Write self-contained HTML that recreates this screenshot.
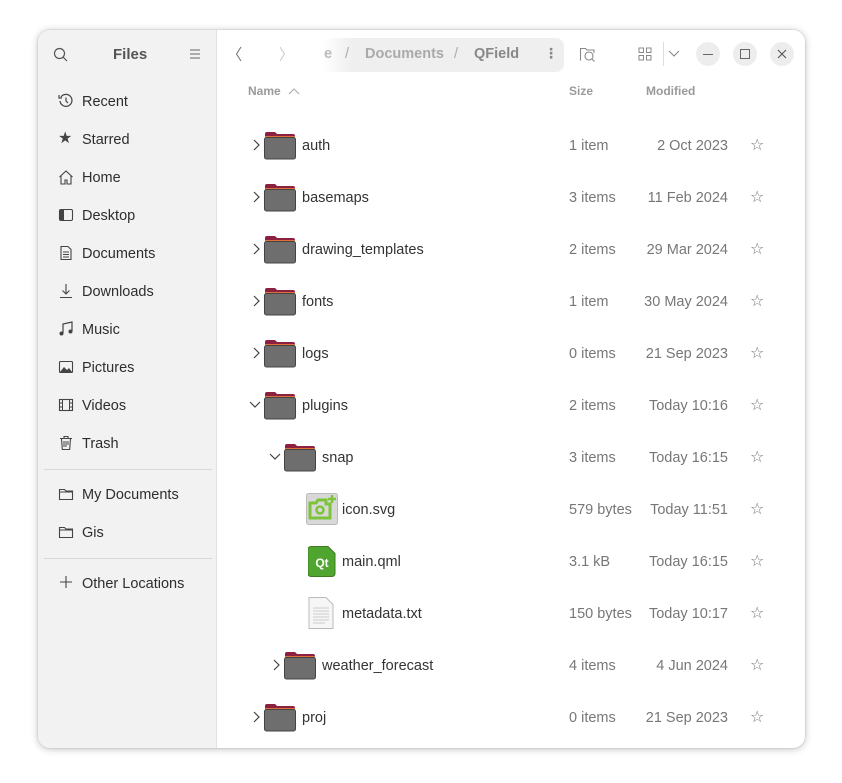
<!DOCTYPE html>
<html><head><meta charset="utf-8"><style>
*{margin:0;padding:0;box-sizing:border-box}
body{width:842px;height:783px;background:#fff;font-family:"Liberation Sans","DejaVu Sans",sans-serif;position:relative;overflow:hidden;color:#333}
.win{position:absolute;left:38px;top:30px;width:767px;height:718px;border-radius:12px;background:#fff;box-shadow:0 1px 8px rgba(0,0,0,.25),0 0 0 1px rgba(0,0,0,.06);overflow:hidden}
.side{position:absolute;left:0;top:0;width:179px;height:100%;background:#f2f2f2;border-right:1px solid #e2e2e2}
.a{position:absolute;white-space:nowrap}
.si{font-size:14.5px;color:#2e2e2e;margin-top:2px}
.sep{position:absolute;left:6px;width:168px;height:1px;background:#d8d8d8}
.hdr{font-size:12px;font-weight:bold;color:#9a9a9a}
.t{font-size:14.5px;color:#333}
.g{font-size:14.5px;color:#777}
.circ{position:absolute;width:24px;height:24px;border-radius:50%;background:#ededed}
</style></head><body>
<div class="win">
<div class="side">
 <svg class="a" style="left:15px;top:17px" width="16" height="16" viewBox="0 0 16 16"><circle cx="6.5" cy="6.5" r="5" fill="none" stroke="#555" stroke-width="1.2"/><path d="M10.3 10.3L14 14" stroke="#555" stroke-width="1.2"/></svg>
 <div class="a" style="left:75px;top:16px;font-size:15px;font-weight:bold;color:#555">Files</div>
 <svg class="a" style="left:151px;top:18px" width="12" height="12" viewBox="0 0 12 12"><path d="M1 2h10M1 6h10M1 10h10" stroke="#666" stroke-width="1"/></svg>
 <svg class="a" style="left:20px;top:63px" width="16" height="16" viewBox="0 0 16 16"><path d="M3 4A6 6 0 1 1 2 8" fill="none" stroke="#444" stroke-width="1.2"/><path d="M1 2v3h3" fill="none" stroke="#444" stroke-width="1.2"/><path d="M8 4.5V8l2 2" fill="none" stroke="#444" stroke-width="1.2"/></svg>
 <div class="a si" style="left:44px;top:62px">Recent</div>
 <div class="a" style="left:20px;top:98px;font-size:16px;color:#444">★</div>
 <div class="a si" style="left:44px;top:100px">Starred</div>
 <svg class="a" style="left:20px;top:139px" width="16" height="16" viewBox="0 0 16 16"><path d="M1.5 8L8 2l6.5 6M3 7v8h4v-4h2v4h4V7" fill="none" stroke="#444" stroke-width="1.1"/></svg>
 <div class="a si" style="left:44px;top:138px">Home</div>
 <svg class="a" style="left:20px;top:177px" width="16" height="16" viewBox="0 0 16 16"><rect x="1.5" y="2.5" width="13" height="11" rx="1.5" fill="none" stroke="#444" stroke-width="1.1"/><rect x="2" y="3" width="4" height="10" fill="#444"/></svg>
 <div class="a si" style="left:44px;top:176px">Desktop</div>
 <svg class="a" style="left:20px;top:215px" width="16" height="16" viewBox="0 0 16 16"><path d="M3 1.5h7l3 3v10H3z" fill="none" stroke="#444" stroke-width="1.1"/><path d="M5 7h6M5 9.5h6M5 12h6" stroke="#444"/></svg>
 <div class="a si" style="left:44px;top:214px">Documents</div>
 <svg class="a" style="left:20px;top:253px" width="16" height="16" viewBox="0 0 16 16"><path d="M8 1v10M4.5 7.5L8 11l3.5-3.5M2 14.5h12" fill="none" stroke="#444" stroke-width="1.1"/></svg>
 <div class="a si" style="left:44px;top:252px">Downloads</div>
 <svg class="a" style="left:20px;top:291px" width="16" height="16" viewBox="0 0 16 16"><path d="M5 12V3l9-2v9" fill="none" stroke="#444" stroke-width="1.2"/><circle cx="3.5" cy="12.5" r="2" fill="#444"/><circle cx="12.5" cy="10.5" r="2" fill="#444"/></svg>
 <div class="a si" style="left:44px;top:290px">Music</div>
 <svg class="a" style="left:20px;top:329px" width="16" height="16" viewBox="0 0 16 16"><rect x="1.5" y="2.5" width="13" height="11" rx="1" fill="none" stroke="#444" stroke-width="1.1"/><path d="M2 13l4-5 3 3 2-2 3 4z" fill="#444"/></svg>
 <div class="a si" style="left:44px;top:328px">Pictures</div>
 <svg class="a" style="left:20px;top:367px" width="16" height="16" viewBox="0 0 16 16"><rect x="1.5" y="2.5" width="13" height="11" fill="none" stroke="#444" stroke-width="1.1"/><path d="M4.5 3v10M11.5 3v10M2 6h2.5M2 10h2.5M11.5 6H14M11.5 10H14" stroke="#444"/></svg>
 <div class="a si" style="left:44px;top:366px">Videos</div>
 <svg class="a" style="left:20px;top:405px" width="16" height="16" viewBox="0 0 16 16"><path d="M2 3.5h12M6 3.5V1.5h4v2M3.5 3.5l.8 11h7.4l.8-11" fill="none" stroke="#444" stroke-width="1.1"/><path d="M6 6v6M8 6v6M10 6v4" stroke="#444"/></svg>
 <div class="a si" style="left:44px;top:404px">Trash</div>
 <div class="sep" style="top:439px"></div>
 <svg class="a" style="left:20px;top:456px" width="16" height="16" viewBox="0 0 16 16"><path d="M1.5 3.5h5l1.5 1.5h6.5v8.5h-13z" fill="none" stroke="#444" stroke-width="1.1"/><path d="M1.5 6h13" stroke="#444"/></svg>
 <div class="a si" style="left:44px;top:455px">My Documents</div>
 <svg class="a" style="left:20px;top:494px" width="16" height="16" viewBox="0 0 16 16"><path d="M1.5 3.5h5l1.5 1.5h6.5v8.5h-13z" fill="none" stroke="#444" stroke-width="1.1"/><path d="M1.5 6h13" stroke="#444"/></svg>
 <div class="a si" style="left:44px;top:493px">Gis</div>
 <div class="sep" style="top:528px"></div>
 <svg class="a" style="left:21px;top:545px" width="14" height="14" viewBox="0 0 14 14"><path d="M7 1v12M1 7h12" stroke="#444" stroke-width="1.1"/></svg>
 <div class="a si" style="left:44px;top:544px">Other Locations</div>
</div>
<!-- header -->
<div class="a" style="left:284px;top:8px;width:242px;height:34px;border-radius:8px;background:linear-gradient(90deg,#fff 0,#efefef 30px,#efefef 100%)"></div>
<svg class="a" style="left:197px;top:16px" width="8" height="16" viewBox="0 0 8 16"><path d="M6 1L1.5 8 6 15" fill="none" stroke="#777" stroke-width="1.1"/></svg>
<svg class="a" style="left:240px;top:16px" width="8" height="16" viewBox="0 0 8 16"><path d="M2 1l4.5 7L2 15" fill="none" stroke="#ccc" stroke-width="1.1"/></svg>
<div class="a" style="left:286px;top:16px;font-size:14.5px;font-weight:bold;color:#bbb">e</div>
<div class="a" style="left:307px;top:16px;font-size:14.5px;color:#aaa">/</div>
<div class="a" style="left:327px;top:16px;font-size:14.5px;font-weight:bold;color:#aaa">Documents</div>
<div class="a" style="left:416px;top:16px;font-size:14.5px;color:#aaa">/</div>
<div class="a" style="left:436px;top:16px;font-size:14.5px;font-weight:bold;color:#888">QField</div>
<div class="a" style="left:506px;top:15px;font-size:14px;color:#888;font-weight:bold">⋮</div>
<svg class="a" style="left:541px;top:15px" width="18" height="18" viewBox="0 0 18 18"><path d="M1.5 15.5V3.5h5l1.5 1.5h7v3" fill="none" stroke="#888" stroke-width="1.1"/><circle cx="10" cy="11" r="4" fill="none" stroke="#888" stroke-width="1.1"/><path d="M13 14l2.5 2.5" stroke="#888" stroke-width="1.2"/></svg>
<svg class="a" style="left:600px;top:17px" width="14" height="14" viewBox="0 0 14 14"><rect x="1" y="1" width="4.5" height="4.5" fill="none" stroke="#888"/><rect x="8.5" y="1" width="4.5" height="4.5" fill="none" stroke="#888"/><rect x="1" y="8.5" width="4.5" height="4.5" fill="none" stroke="#888"/><rect x="8.5" y="8.5" width="4.5" height="4.5" fill="none" stroke="#888"/></svg>
<div class="a" style="left:625px;top:12px;width:1px;height:24px;background:#ddd"></div>
<svg class="a" style="left:630px;top:19px" width="12" height="10" viewBox="0 0 12 10"><path d="M1 2l5 5 5-5" fill="none" stroke="#888" stroke-width="1.1"/></svg>
<div class="circ" style="left:658px;top:12px"></div><div class="a" style="left:665px;top:24px;width:10px;height:1px;background:#666"></div>
<div class="circ" style="left:695px;top:12px"></div><div class="a" style="left:702px;top:19px;width:10px;height:10px;border:1px solid #666"></div>
<div class="circ" style="left:732px;top:12px"></div><svg class="a" style="left:739px;top:19px" width="10" height="10" viewBox="0 0 10 10"><path d="M1 1l8 8M9 1L1 9" stroke="#555" stroke-width="1.1"/></svg>
<div class="a hdr" style="left:210px;top:54px">Name</div>
<svg class="a" style="left:250px;top:57px" width="12" height="8" viewBox="0 0 12 8"><path d="M1 7l5-5 5 5" fill="none" stroke="#aaa" stroke-width="1.1"/></svg>
<div class="a hdr" style="left:531px;top:54px">Size</div>
<div class="a hdr" style="left:608px;top:54px">Modified</div>
<div id="rows"></div>
</div>
<script>
var R=[[0,'c','f','auth','1 item','2 Oct 2023'],[0,'c','f','basemaps','3 items','11 Feb 2024'],[0,'c','f','drawing_templates','2 items','29 Mar 2024'],[0,'c','f','fonts','1 item','30 May 2024'],[0,'c','f','logs','0 items','21 Sep 2023'],[0,'o','f','plugins','2 items','Today 10:16'],[1,'o','f','snap','3 items','Today 16:15'],[2,'','s','icon.svg','579 bytes','Today 11:51'],[2,'','q','main.qml','3.1 kB','Today 16:15'],[2,'','t','metadata.txt','150 bytes','Today 10:17'],[1,'c','f','weather_forecast','4 items','4 Jun 2024'],[0,'c','f','proj','0 items','21 Sep 2023']];
var h='';
R.forEach(function(r,i){var cy=115+52*i,x=226+20*r[0];
if(r[1]=='c')h+='<svg class="a" style="left:'+(x-12)+'px;top:'+(cy-6)+'px" width="8" height="12" viewBox="0 0 8 12"><path d="M2 1l5 5-5 5" fill="none" stroke="#444" stroke-width="1.2"/></svg>';
if(r[1]=='o')h+='<svg class="a" style="left:'+(x-15)+'px;top:'+(cy-4)+'px" width="12" height="8" viewBox="0 0 12 8"><path d="M1 1l5 5 5-5" fill="none" stroke="#444" stroke-width="1.2"/></svg>';
var ic='';
if(r[2]=='f')ic='<svg class="a" style="left:'+x+'px;top:'+(cy-16)+'px" width="32" height="32" viewBox="0 0 32 32"><path d="M1 5a2 2 0 0 1 2-2h8l2 2h16a2 2 0 0 1 2 2v4H1z" fill="#8c2040"/><rect x="1" y="7" width="30" height="3" fill="#e0703a"/><rect x="0.5" y="8.5" width="31" height="21.5" rx="2" fill="#6e6e6e" stroke="#444" stroke-width="1"/></svg>';
if(r[2]=='s')ic='<svg class="a" style="left:'+(x+2)+'px;top:'+(cy-16)+'px" width="32" height="32" viewBox="0 0 32 32"><rect x="0.5" y="0.5" width="31" height="31" rx="2" fill="#d8d8d8" stroke="#bbb"/><path d="M4 10h6l2-3h8v4h4v14H4z" fill="none" stroke="#7cc43a" stroke-width="3"/><circle cx="14" cy="17" r="3.5" fill="none" stroke="#7cc43a" stroke-width="2.5"/><path d="M26 2v8M22 6h8" stroke="#7cc43a" stroke-width="2.5"/></svg>';
if(r[2]=='q')ic='<svg class="a" style="left:'+(x+4)+'px;top:'+(cy-15)+'px" width="28" height="31" viewBox="0 0 28 31"><path d="M3 .5h17l7 7v20a3 3 0 0 1-3 3H3a3 3 0 0 1-3-3v-24a3 3 0 0 1 3-3z" fill="#4fa52e" stroke="#3a7d22"/><text x="14" y="21" font-family="Liberation Sans" font-weight="bold" font-size="12" fill="#fff" text-anchor="middle">Qt</text></svg>';
if(r[2]=='t')ic='<svg class="a" style="left:'+(x+4)+'px;top:'+(cy-16)+'px" width="26" height="32" viewBox="0 0 26 32"><path d="M1 .5h17l7 7v24H1z" fill="#f6f6f6" stroke="#bbb"/><path d="M5 11h16M5 14h16M5 17h16M5 20h16M5 23h16M5 26h12" stroke="#ccc"/></svg>';
h+=ic+'<div class="a t" style="left:'+(x+38)+'px;top:'+(cy-7)+'px">'+r[3]+'</div>';
h+='<div class="a g" style="left:531px;top:'+(cy-7)+'px">'+r[4]+'</div>';
h+='<div class="a g" style="right:77px;top:'+(cy-7)+'px">'+r[5]+'</div>';
h+='<div class="a" style="left:712px;top:'+(cy-10)+'px;font-size:16px;color:#777">☆</div>';});
document.getElementById('rows').innerHTML=h;
</script>
</body></html>
